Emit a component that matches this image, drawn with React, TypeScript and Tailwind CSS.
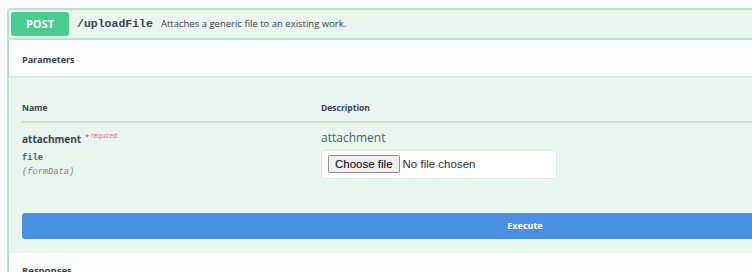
import React from "react";

const sans = "font-['Open_Sans','Noto_Sans',sans-serif]";
const mono = "font-['Liberation_Mono','DejaVu_Sans_Mono',monospace]";

function FileInput() {
  return (
    <div className="flex h-[29px] w-[236px] items-center rounded-[3px] border border-[#e3e6e4] bg-white pl-[6px] font-['Liberation_Sans',Arial,sans-serif] text-[11.5px] text-[#222]">
      <span className="flex h-[18px] items-center rounded-[2px] border border-[#8f8f8f] bg-[#efefef] px-[6px] text-black">
        Choose file
      </span>
      <span className="ml-[3px] text-[#333]">No file chosen</span>
    </div>
  );
}

export default function App() {
  return (
    <div className={`h-[272px] w-full overflow-hidden bg-[#fafafa] ${sans} text-[#3b4151]`}>
      <div className="w-[1050px] pl-[7px] pt-[8px]">
        <div className="w-[1036px] rounded-[4px] border-2 border-[#b3e6cd] bg-[#e8f6ef]">
          {/* summary row */}
          <div className="flex h-[30px] items-center border-b-2 border-[#b3e6cd] pl-[2px]">
            <span className="flex h-[24px] w-[58px] items-center justify-center rounded-[3px] bg-[#49cc90] text-[11px] font-bold text-white">
              POST
            </span>
            <span className={`ml-[8px] ${mono} text-[11.5px] font-bold text-[#3b4151]`}>/uploadFile</span>
            <span className="ml-[8px] text-[9.5px] text-[#3b4151]">Attaches a generic file to an existing work.</span>
          </div>

          {/* parameters header */}
          <div className="flex h-[36px] items-center bg-[#fbfefc] pl-[13px] pt-[4px] shadow-[0_1px_2px_rgba(0,0,0,0.1)]">
            <h4 className="text-[9px] font-bold">Parameters</h4>
          </div>

          {/* parameters table */}
          <div className="px-[13px] pt-[26px]">
            <div className="flex border-b-2 border-[#cbdcd3] pb-[6px] text-[8.5px] font-bold">
              <div className="w-[299px]">Name</div>
              <div>Description</div>
            </div>
            <div className="flex pt-[8px]">
              <div className="w-[299px]">
                <div className="flex items-start">
                  <span className="text-[10px] font-bold leading-[16px]">attachment</span>
                  <span className="ml-[4px] mt-[1px] text-[7px] font-bold text-[#f25b5b]">*</span>
                  <span className="ml-[2px] text-[6.5px] leading-[9px] text-[#f25b5b]">required</span>
                </div>
                <div className={`mt-[4px] ${mono} text-[8.7px] font-bold leading-[14px] text-[#555]`}>file</div>
                <div className={`${mono} text-[8.7px] italic leading-[14px] text-[#808080]`}>(formData)</div>
              </div>
              <div>
                <div className="text-[12px] leading-[14px] text-[#555b66]">attachment</div>
                <div className="mt-[5px]">
                  <FileInput />
                </div>
              </div>
            </div>

            <div className="pb-[14px] pt-[34px]">
              <button className="flex h-[26px] w-full items-center justify-center rounded-[3px] bg-[#4990e2] text-[9px] font-bold text-white">
                Execute
              </button>
            </div>
          </div>

          {/* responses */}
          <div className="h-[40px] bg-[#fbfefc] pl-[13px] pt-[11px] shadow-[0_1px_2px_rgba(0,0,0,0.1)]">
            <h4 className="text-[9.5px] font-bold">Responses</h4>
          </div>
        </div>
      </div>
    </div>
  );
}
